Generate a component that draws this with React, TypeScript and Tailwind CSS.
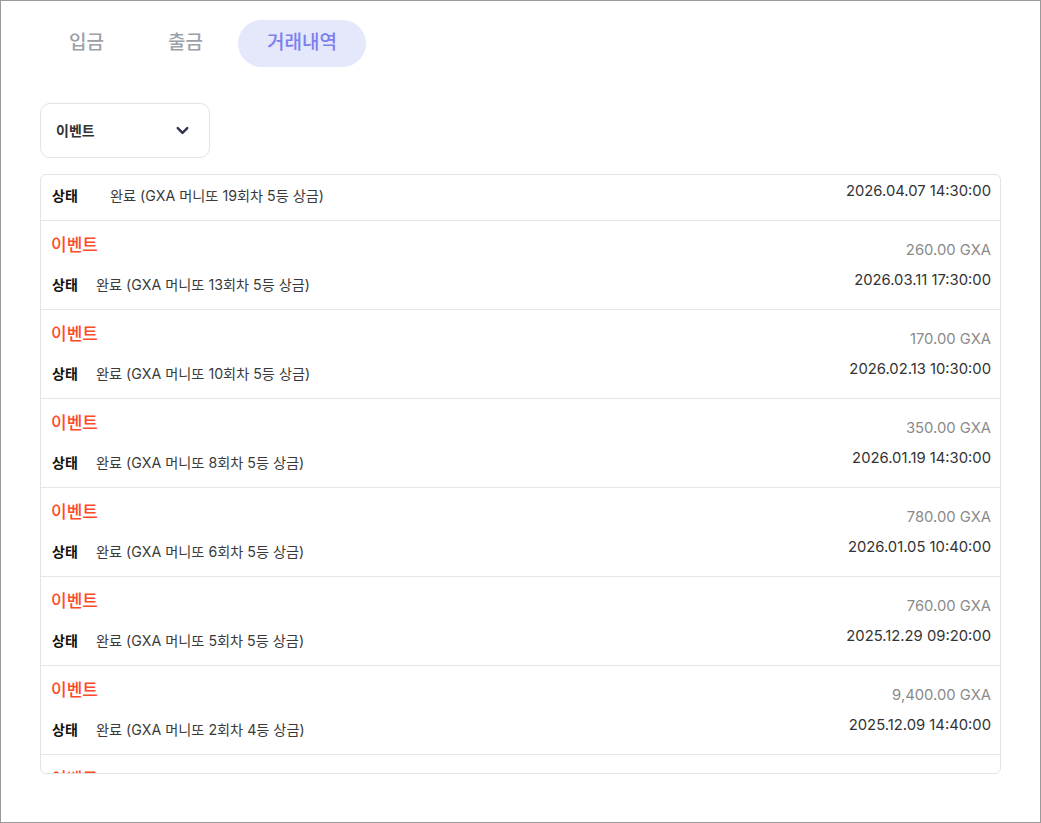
import { useLayoutEffect, useRef } from "react";
import { ChevronDown } from "lucide-react";

type Entry = {
  round: string;
  amount: string;
  date: string;
};

const entries: Entry[] = [
  { round: "19회차 5등", amount: "120.00 GXA", date: "2026.04.07 14:30:00" },
  { round: "13회차 5등", amount: "260.00 GXA", date: "2026.03.11 17:30:00" },
  { round: "10회차 5등", amount: "170.00 GXA", date: "2026.02.13 10:30:00" },
  { round: "8회차 5등", amount: "350.00 GXA", date: "2026.01.19 14:30:00" },
  { round: "6회차 5등", amount: "780.00 GXA", date: "2026.01.05 10:40:00" },
  { round: "5회차 5등", amount: "760.00 GXA", date: "2025.12.29 09:20:00" },
  { round: "2회차 4등", amount: "9,400.00 GXA", date: "2025.12.09 14:40:00" },
  { round: "1회차 5등", amount: "210.00 GXA", date: "2025.11.28 11:10:00" },
];

const tabs = ["입금", "출금", "거래내역"];

function Row({ entry, wide }: { entry: Entry; wide?: boolean }) {
  return (
    <div className="flex h-[89px] shrink-0 justify-between border-b border-[#e6e6e6] pl-[10px] pr-[9px]">
      <div className="pt-[12px]">
        <p className="text-[17px] font-medium leading-[24px] text-[#ff4a2a]">이벤트</p>
        <div className="mt-[16px] flex items-center pl-px text-[14px] leading-[24px]">
          <span className={wide ? "w-[58px] font-semibold text-[#111]" : "w-[44px] font-semibold text-[#111]"}>상태</span>
          <span className="text-[14.2px] text-[#3a3a3a]">완료 (GXA 머니또 {entry.round} 상금)</span>
        </div>
      </div>
      <div className="flex flex-col items-end pt-[18px] text-[14.8px] leading-[22px]">
        <span className="text-[#8a8a8a]">{entry.amount}</span>
        <span className="mt-[8px] text-[#333]">{entry.date}</span>
      </div>
    </div>
  );
}

export default function App() {
  const listRef = useRef<HTMLDivElement>(null);

  useLayoutEffect(() => {
    if (listRef.current) listRef.current.scrollTop = 43;
  }, []);

  return (
    <div
      className="h-[823px] w-[1041px] border border-[#9a9a9a] bg-white"
      style={{ fontFamily: '"Inter", "Noto Sans CJK KR", sans-serif' }}
    >
      <div className="px-[39px] pt-[19px]">
        <div className="flex gap-[6px]">
          {tabs.map((tab) => (
            <button
              key={tab}
              className={
                tab === "거래내역"
                  ? "h-[47px] rounded-full bg-[#e5e7fb] px-[29px] text-[19px] font-medium text-[#7c80ef]"
                  : "h-[47px] rounded-full px-[29px] text-[19px] font-medium text-[#9ca0a8]"
              }
            >
              {tab}
            </button>
          ))}
        </div>

        <button className="mt-[36px] flex h-[55px] w-[170px] items-center justify-between rounded-[10px] border border-[#e3e3e3] pl-[15px] pr-[17px]">
          <span className="text-[14px] font-semibold text-[#333]">이벤트</span>
          <ChevronDown size={19} strokeWidth={3} className="text-[#2f3350]" />
        </button>

        <div
          ref={listRef}
          className="mt-[16px] flex h-[600px] w-[961px] flex-col overflow-hidden rounded-[6px] border border-[#e3e3e3]"
        >
          {entries.map((entry, i) => (
            <Row key={entry.date} entry={entry} wide={i === 0} />
          ))}
        </div>
      </div>
    </div>
  );
}
